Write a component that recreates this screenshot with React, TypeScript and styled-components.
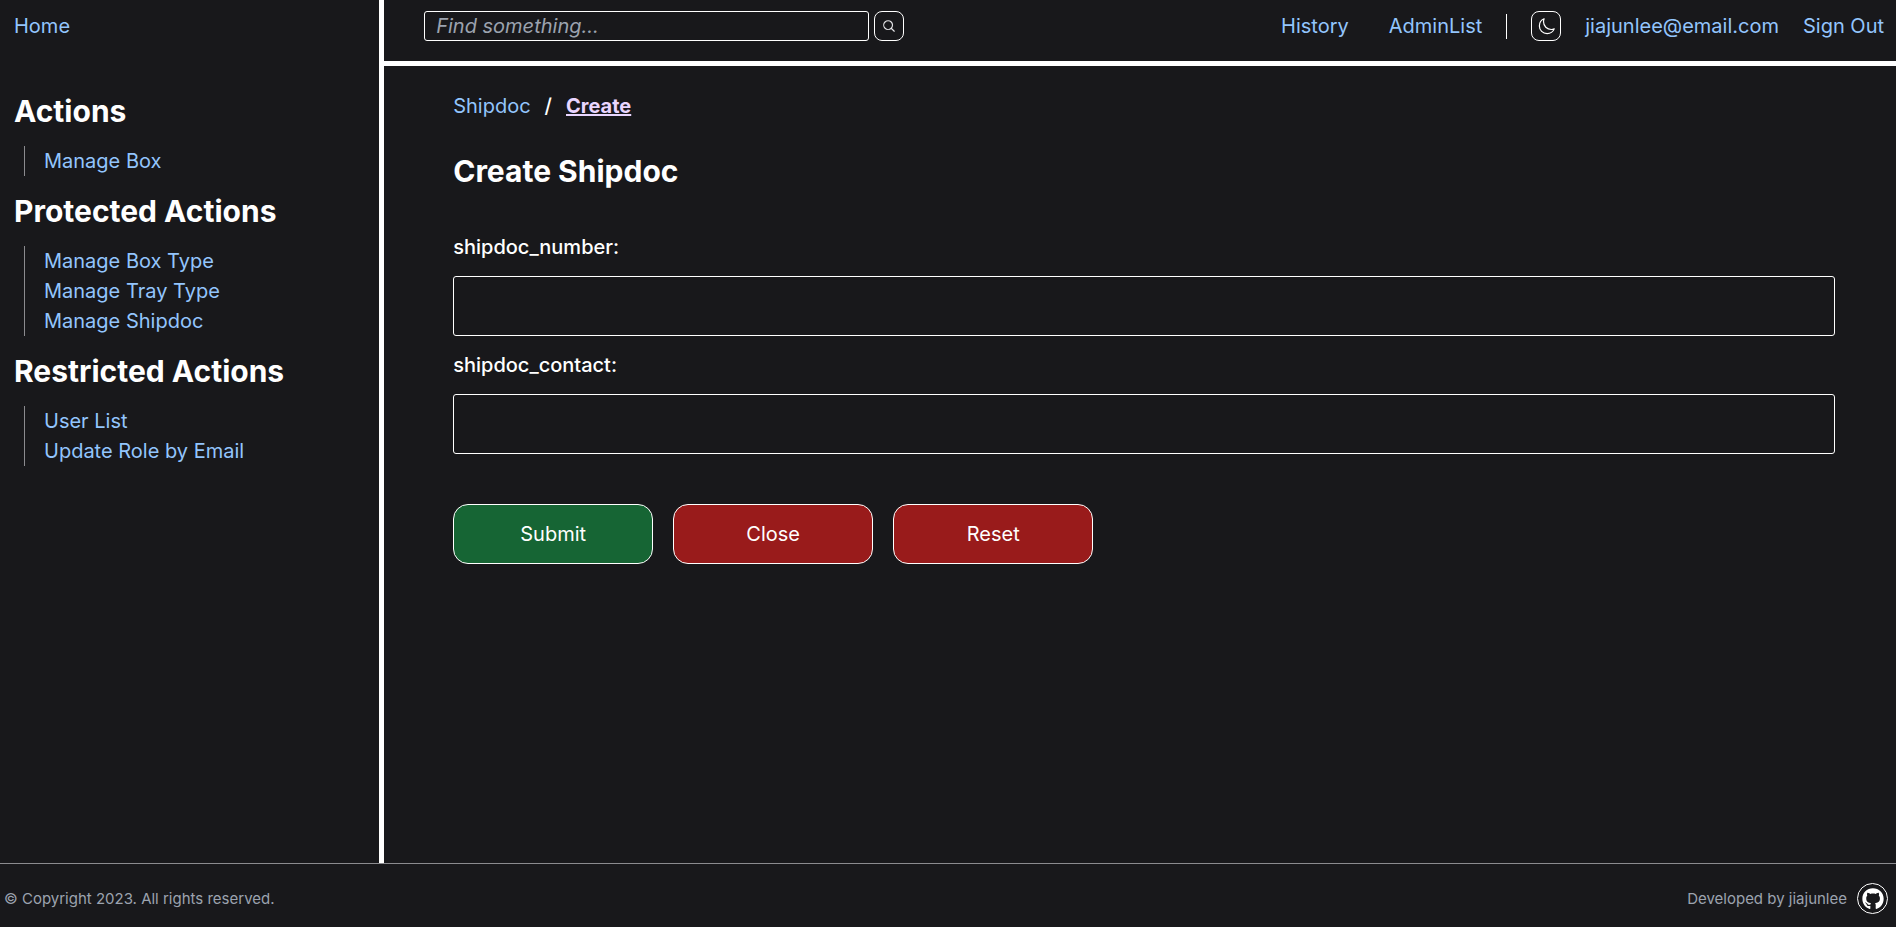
import React from "react";
import styled, { createGlobalStyle } from "styled-components";
import { HiOutlineMagnifyingGlass, HiOutlineMoon } from "react-icons/hi2";
import { FaGithub } from "react-icons/fa";

const GlobalStyle = createGlobalStyle`
  *, *::before, *::after { box-sizing: border-box; }
  body {
    margin: 0;
    background: #18181b;
    color: #fff;
    font-family: Inter, "Liberation Sans", sans-serif;
    font-size: 20px;
    line-height: 30px;
  }
  h1, h2, ul, ol { margin: 0; padding: 0; }
  ul, ol { list-style: none; }
  input, button { font: inherit; color: inherit; }
`;

const Page = styled.div`
  display: flex;
  flex-direction: column;
  min-height: 100vh;
`;

const Body = styled.div`
  display: flex;
  flex: 1;
`;

const TextLink = styled.a`
  color: #93c5fd;
  text-decoration: none;
  white-space: nowrap;
  &:hover { text-decoration: underline; }
`;

const Sidebar = styled.aside`
  flex: none;
  width: calc(20% + 5px);
  padding: 11px 14px;
  border-right: 5px solid #fff;
`;

const SideNav = styled.nav`
  display: flex;
  flex-direction: column;
  gap: 15px;
  margin-top: 50px;
`;

const Heading = styled.h2`
  font-size: 30px;
  line-height: 40px;
  font-weight: 700;
`;

const LinkList = styled.ul`
  margin-left: 10px;
  padding-left: 19px;
  border-left: 1px solid #8b8b8f;
  li { height: 30px; }
`;

const Column = styled.div`
  display: flex;
  flex-direction: column;
  flex: 1;
  min-width: 0;
`;

const TopBar = styled.header`
  display: flex;
  justify-content: space-between;
  align-items: center;
  gap: 24px;
  padding: 11px 12px 20px 40px;
  border-bottom: 5px solid #fff;
`;

const SearchForm = styled.form`
  display: flex;
  flex: 0 1 480px;
  gap: 5px;
`;

const SearchInput = styled.input`
  flex: 1;
  min-width: 0;
  height: 30px;
  padding: 0 11px;
  background: transparent;
  border: 1px solid #fff;
  border-radius: 3px;
  &::placeholder { color: #9ca3af; font-style: italic; opacity: 1; }
`;

const IconButton = styled.button`
  display: flex;
  flex: none;
  align-items: center;
  justify-content: center;
  width: 30px;
  height: 30px;
  padding: 0;
  background: transparent;
  border: 1px solid #fff;
  border-radius: 8px;
  cursor: pointer;
`;

const SearchIcon = styled(HiOutlineMagnifyingGlass)`
  color: #e4e4e7;
  stroke-width: 2;
`;

const TopLinks = styled.nav`
  display: flex;
  align-items: center;
  gap: 24px;
`;

const PageLinks = styled.div`
  display: flex;
  gap: 40px;
`;

const Divider = styled.span`
  width: 1px;
  height: 25px;
  background: #fff;
`;

const Content = styled.main`
  padding: 25px 61px 40px 69px;
`;

const Crumbs = styled.ol`
  display: flex;
  gap: 14px;
  font-weight: 500;
  ${TextLink} { font-weight: 400; }
  ${TextLink}[aria-current] {
    color: #e9d5ff;
    font-weight: 700;
    text-decoration: underline;
  }
`;

const Title = styled(Heading).attrs({ as: "h1" })`
  margin: 30px 0 41px;
`;

const Field = styled.div`
  display: flex;
  flex-direction: column;
  gap: 14px;
  margin-bottom: 14px;
  label { font-weight: 500; }
`;

const FieldInput = styled.input`
  width: 100%;
  height: 60px;
  padding: 0 20px;
  background: transparent;
  border: 1px solid #fff;
  border-radius: 3px;
`;

const ButtonRow = styled.div`
  display: flex;
  flex-wrap: wrap;
  gap: 20px;
  margin-top: 50px;
`;

const ActionButton = styled.button<{ $tone: "green" | "red" }>`
  width: 200px;
  height: 60px;
  background: ${(p) => (p.$tone === "green" ? "#166534" : "#991b1b")};
  border: 1px solid #fff;
  border-radius: 15px;
  cursor: pointer;
`;

const Footer = styled.footer`
  display: flex;
  align-items: center;
  justify-content: space-between;
  height: 64px;
  padding: 6px 8px 0 4px;
  border-top: 1px solid #8b8b8f;
  color: #9ca3af;
  font-size: 15px;
`;

const Credit = styled.div`
  display: flex;
  align-items: center;
  gap: 10px;
`;

const GithubLink = styled.a`
  display: flex;
  align-items: center;
  justify-content: center;
  width: 31px;
  height: 31px;
  border: 1px solid #fff;
  border-radius: 50%;
  color: #fff;
`;

const sections = [
  { title: "Actions", links: ["Manage Box"] },
  { title: "Protected Actions", links: ["Manage Box Type", "Manage Tray Type", "Manage Shipdoc"] },
  { title: "Restricted Actions", links: ["User List", "Update Role by Email"] },
];

const fields = ["shipdoc_number", "shipdoc_contact"];

export default function App() {
  return (
    <>
      <GlobalStyle />
      <Page>
        <Body>
          <Sidebar>
            <TextLink href="#home">Home</TextLink>
            <SideNav aria-label="Actions">
              {sections.map((section) => (
                <React.Fragment key={section.title}>
                  <Heading>{section.title}</Heading>
                  <LinkList>
                    {section.links.map((link) => (
                      <li key={link}>
                        <TextLink href="#action">{link}</TextLink>
                      </li>
                    ))}
                  </LinkList>
                </React.Fragment>
              ))}
            </SideNav>
          </Sidebar>
          <Column>
            <TopBar>
              <SearchForm role="search" onSubmit={(e) => e.preventDefault()}>
                <SearchInput type="search" aria-label="Search" placeholder="Find something..." />
                <IconButton type="submit" aria-label="Search">
                  <SearchIcon size={14} />
                </IconButton>
              </SearchForm>
              <TopLinks aria-label="Account">
                <PageLinks>
                  <TextLink href="#history">History</TextLink>
                  <TextLink href="#admins">AdminList</TextLink>
                </PageLinks>
                <Divider />
                <IconButton type="button" aria-label="Toggle theme">
                  <HiOutlineMoon size={19} />
                </IconButton>
                <TextLink href="#profile">jiajunlee@email.com</TextLink>
                <TextLink href="#signout">Sign Out</TextLink>
              </TopLinks>
            </TopBar>
            <Content>
              <Crumbs>
                <li><TextLink href="#shipdoc">Shipdoc</TextLink></li>
                <li aria-hidden="true">/</li>
                <li><TextLink href="#create" aria-current="page">Create</TextLink></li>
              </Crumbs>
              <Title>Create Shipdoc</Title>
              <form onSubmit={(e) => e.preventDefault()}>
                {fields.map((name) => (
                  <Field key={name}>
                    <label htmlFor={name}>{name}:</label>
                    <FieldInput id={name} name={name} type="text" />
                  </Field>
                ))}
                <ButtonRow>
                  <ActionButton type="submit" $tone="green">Submit</ActionButton>
                  <ActionButton type="button" $tone="red">Close</ActionButton>
                  <ActionButton type="reset" $tone="red">Reset</ActionButton>
                </ButtonRow>
              </form>
            </Content>
          </Column>
        </Body>
        <Footer>
          <span>© Copyright 2023. All rights reserved.</span>
          <Credit>
            <span>Developed by jiajunlee</span>
            <GithubLink href="#github" aria-label="GitHub">
              <FaGithub size={22} />
            </GithubLink>
          </Credit>
        </Footer>
      </Page>
    </>
  );
}
